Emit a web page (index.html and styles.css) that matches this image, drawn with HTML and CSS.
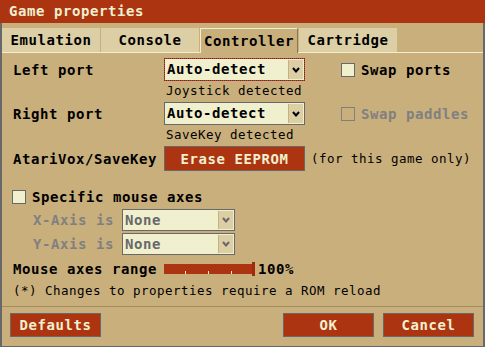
FILE: index.html
```html
<!DOCTYPE html>
<html lang="en">
<head>
    <meta charset="UTF-8">
    <meta name="viewport" content="width=device-width, initial-scale=1.0">
    <title>Game properties</title>
    <link rel="stylesheet" href="styles.css">
</head>
<body>
    <div class="dialog">
        <div class="titlebar">Game properties</div>

        <div class="frame">
            <!-- tab strip -->
            <div class="tabs">
                <div class="tab">Emulation</div>
                <div class="tab">Console</div>
                <div class="tab active">Controller</div>
                <div class="tab">Cartridge</div>
            </div>

            <div class="panel">
                <div class="row port-row">
                    <span class="label">Left port</span>
                    <div class="select focus">
                        <span class="value">Auto-detect</span>
                        <span class="arrow"><svg width="8" height="6" viewBox="0 0 8 6"><polyline points="1,1 4,4.5 7,1" fill="none" stroke="#000" stroke-width="2"/></svg></span>
                    </div>
                    <div class="check">
                        <span class="box"></span>
                        <span>Swap ports</span>
                    </div>
                </div>
                <div class="caption">Joystick detected</div>

                <div class="row port-row">
                    <span class="label">Right port</span>
                    <div class="select">
                        <span class="value">Auto-detect</span>
                        <span class="arrow"><svg width="8" height="6" viewBox="0 0 8 6"><polyline points="1,1 4,4.5 7,1" fill="none" stroke="#000" stroke-width="2"/></svg></span>
                    </div>
                    <div class="check disabled">
                        <span class="box"></span>
                        <span>Swap paddles</span>
                    </div>
                </div>
                <div class="caption">SaveKey detected</div>

                <div class="row eeprom-row">
                    <span class="label">AtariVox/SaveKey</span>
                    <button class="btn wide">Erase EEPROM</button>
                    <span class="note">(for this game only)</span>
                </div>

                <div class="check mouse-check">
                    <span class="box"></span>
                    <span>Specific mouse axes</span>
                </div>

                <div class="row axis-row">
                    <span class="axis-label">X-Axis is</span>
                    <div class="select small disabled">
                        <span class="value">None</span>
                        <span class="arrow"><svg width="8" height="6" viewBox="0 0 8 6"><polyline points="1,1 4,4.5 7,1" fill="none" stroke="#686868" stroke-width="2"/></svg></span>
                    </div>
                </div>
                <div class="row axis-row">
                    <span class="axis-label">Y-Axis is</span>
                    <div class="select small disabled">
                        <span class="value">None</span>
                        <span class="arrow"><svg width="8" height="6" viewBox="0 0 8 6"><polyline points="1,1 4,4.5 7,1" fill="none" stroke="#686868" stroke-width="2"/></svg></span>
                    </div>
                </div>

                <div class="row range-row">
                    <span class="label">Mouse axes range</span>
                    <div class="slider">
                        <span class="tick"></span>
                        <span class="tick"></span>
                        <span class="tick"></span>
                    </div>
                    <span class="handle"></span>
                    <span class="range-value">100%</span>
                </div>

                <div class="note hint">(*) Changes to properties require a ROM reload</div>
            </div>

            <div class="footer">
                <button class="btn">Defaults</button>
                <div class="footer-right">
                    <button class="btn">OK</button>
                    <button class="btn">Cancel</button>
                </div>
            </div>
        </div>
    </div>
</body>
</html>
```

FILE: styles.css
```css
body {
    margin: 0;
    font-family: "DejaVu Sans Mono", monospace;
    font-size: 14px;
    font-weight: bold;
    letter-spacing: 0.57px;
    color: #000;
    background: #c9af7c;
}
.dialog {
    width: 485px;
    height: 347px;
    display: flex;
    flex-direction: column;
    background: #c9af7c;
}
.titlebar {
    height: 23px;
    line-height: 23px;
    padding-left: 9px;
    background: #ac3410;
    color: #f0f0cf;
    flex-shrink: 0;
}
.frame {
    flex: 1;
    display: flex;
    flex-direction: column;
    border-left: 2px solid #686868;
    border-right: 2px solid #686868;
    border-bottom: 1px solid #686868;
}
/* tabs */
.tabs {
    display: flex;
    gap: 1px;
    margin-top: 5px;
    border-bottom: 1px solid #f0f0cf;
}
.tab {
    width: 98px;
    height: 24px;
    line-height: 24px;
    text-align: center;
    background: #dccfa5;
    box-sizing: border-box;
}
.tab.active {
    background: #c9af7c;
    border-top: 1px solid #f0f0cf;
    border-left: 1px solid #f0f0cf;
    border-right: 1px solid #8c7850;
    height: 25px;
    margin-bottom: -1px;
}
/* panel */
.panel {
    padding: 5px 0 0 11px;
}
.row {
    display: flex;
    align-items: center;
}
.label {
    width: 151px;
    flex-shrink: 0;
}
.port-row {
    height: 23px;
}
.select {
    width: 141px;
    height: 23px;
    box-sizing: border-box;
    border: 1px solid #686868;
    background: #f0f0cf;
    display: flex;
    align-items: stretch;
}
.select.focus {
    outline: 1px dotted #c80000;
    outline-offset: -1px;
}
.select .value {
    flex: 1;
    padding-left: 2px;
    line-height: 21px;
}
.select .arrow {
    width: 14px;
    margin: 1px;
    background: #dccfa5;
    border-left: 1px solid #c9af7c;
    display: flex;
    align-items: center;
    justify-content: center;
}
.select.small {
    width: 113px;
    height: 22px;
}
.select.small .value {
    line-height: 20px;
}
.select.disabled {
    color: #686868;
}
.check {
    display: flex;
    align-items: center;
    margin-left: 36px;
}
.box {
    width: 14px;
    height: 14px;
    box-sizing: border-box;
    border: 1px solid #686868;
    background: #f0f0cf;
    margin-right: 6px;
}
.check.disabled {
    color: #808080;
}
.check.disabled .box {
    background: transparent;
    border-color: #808080;
}
.caption {
    height: 21px;
    line-height: 19px;
    padding-left: 153px;
    font-weight: normal;
    font-size: 12.5px;
    letter-spacing: 0.475px;
}
.eeprom-row {
    height: 25px;
}
.btn {
    width: 91px;
    height: 24px;
    padding: 0;
    border: 1px solid #686868;
    background: #ac3410;
    color: #f0f0cf;
    font-family: inherit;
    font-size: 14px;
    font-weight: bold;
    letter-spacing: 0.57px;
}
.btn.wide {
    width: 141px;
    height: 25px;
}
.note {
    font-weight: normal;
    font-size: 12.5px;
    letter-spacing: 0.475px;
    margin-left: 6px;
}
.mouse-check {
    margin: 19px 0 0 -1px;
    height: 14px;
}
.axis-row {
    height: 22px;
    margin-top: 2px;
    padding-left: 20px;
    color: #808080;
}
.mouse-check + .axis-row {
    margin-top: 5px;
}
.axis-label {
    width: 89px;
}
.range-row {
    height: 14px;
    margin-top: 7px;
}
.slider {
    width: 88px;
    height: 10px;
    background: #ac3410;
    display: flex;
    align-items: flex-end;
    gap: 22px;
    padding-left: 21px;
    box-sizing: border-box;
}
.tick {
    width: 1px;
    height: 3px;
    background: #f0f0cf;
}
.handle {
    width: 3px;
    height: 14px;
    background: #9f2a0c;
}
.range-value {
    margin-left: 3px;
}
.hint {
    margin: 6px 0 0 0;
    height: 18px;
    line-height: 18px;
}
.footer {
    margin-top: auto;
    border-top: 1px solid #a38c61;
    padding: 6px 9px 9px 8px;
    display: flex;
    justify-content: space-between;
}
.footer-right {
    display: flex;
    gap: 9px;
}
```
